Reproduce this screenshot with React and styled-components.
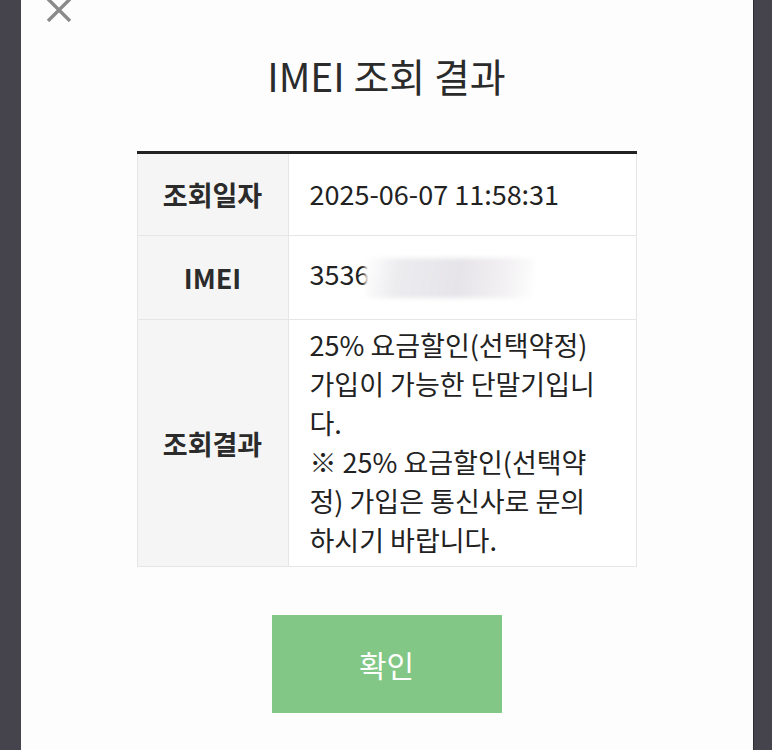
import styled, { createGlobalStyle } from 'styled-components'

const GlobalStyle = createGlobalStyle`
  html, body {
    margin: 0;
    padding: 0;
    background: #45444d;
  }
  * {
    box-sizing: border-box;
  }
`

const Page = styled.div`
  display: flex;
  justify-content: center;
  padding-left: 2px;
  height: 750px;
  overflow: hidden;
  font-family: "Noto Sans CJK KR", "Noto Sans", sans-serif;
`

const Modal = styled.div`
  width: 733px;
  height: 750px;
  background: #fdfdfd;
  border-right: 1px solid #2e2d33;
  display: flex;
  flex-direction: column;
  align-items: center;
`

const CloseRow = styled.div`
  align-self: stretch;
  height: 22px;
  padding-left: 25px;
  margin-top: -2px;
`

const CloseButton = styled.button`
  border: none;
  background: none;
  padding: 0;
  width: 26px;
  height: 24px;
  cursor: pointer;
  display: block;
`

const Title = styled.h1`
  margin: 32px 0 0;
  font-size: 39px;
  line-height: 46px;
  font-weight: 400;
  color: #2b2b2b;
`

const Table = styled.table`
  margin-top: 53px;
  width: 500px;
  border-collapse: collapse;
  border-top: 3px solid #222;
  table-layout: fixed;
`

const Row = styled.tr`
  height: ${(p) => p.$h}px;
`

const Label = styled.th`
  width: 151px;
  background: #f5f5f5;
  border: 1px solid #e6e6e6;
  border-top: ${(p) => (p.$first ? 'none' : '1px solid #e6e6e6')};
  font-size: 27px;
  font-weight: 700;
  color: #2b2b2b;
  text-align: center;
  vertical-align: middle;
`

const Value = styled.td`
  border: 1px solid #e6e6e6;
  border-top: ${(p) => (p.$first ? 'none' : '1px solid #e6e6e6')};
  padding: 4px 30px 7px 21px;
  font-size: 27px;
  line-height: 39px;
  color: #222;
  text-align: left;
  vertical-align: middle;
  word-break: break-all;
  background: #fff;
`

const Masked = styled.span`
  display: inline-block;
  width: 170px;
  height: 40px;
  vertical-align: middle;
  margin-left: -4px;
  background: linear-gradient(100deg, #fff 0%, #ececef 20%, #e6e4e8 55%, #f2f0f2 80%, #fff 100%);
  filter: blur(2px);
  border-radius: 6px;
`

const ConfirmButton = styled.button`
  margin-top: 48px;
  width: 230px;
  height: 98px;
  border: none;
  background: #82c785;
  color: #fff;
  font-family: "Noto Sans CJK KR", "Noto Sans", sans-serif;
  font-size: 30px;
  font-weight: 400;
  cursor: pointer;
`

const App = () => {
  return (
    <Page>
      <GlobalStyle />
      <Modal>
        <CloseRow>
          <CloseButton aria-label="close">
            <svg width="26" height="24" viewBox="0 0 26 24">
              <path d="M2 1 L24 23 M24 1 L2 23" stroke="#8a8a8a" strokeWidth="3.4" strokeLinecap="butt" />
            </svg>
          </CloseButton>
        </CloseRow>
        <Title>IMEI 조회 결과</Title>
        <Table>
          <tbody>
            <Row $h={83}>
              <Label $first>조회일자</Label>
              <Value $first>2025-06-07 11:58:31</Value>
            </Row>
            <Row $h={84}>
              <Label>IMEI</Label>
              <Value>
                3536<Masked />
              </Value>
            </Row>
            <Row $h={247}>
              <Label>조회결과</Label>
              <Value>
                25% 요금할인(선택약정) 가입이 가능한 단말기입니다.
                <br />※ 25% 요금할인(선택약정) 가입은 통신사로 문의하시기 바랍니다.
              </Value>
            </Row>
          </tbody>
        </Table>
        <ConfirmButton>확인</ConfirmButton>
      </Modal>
    </Page>
  )
}

export default App
